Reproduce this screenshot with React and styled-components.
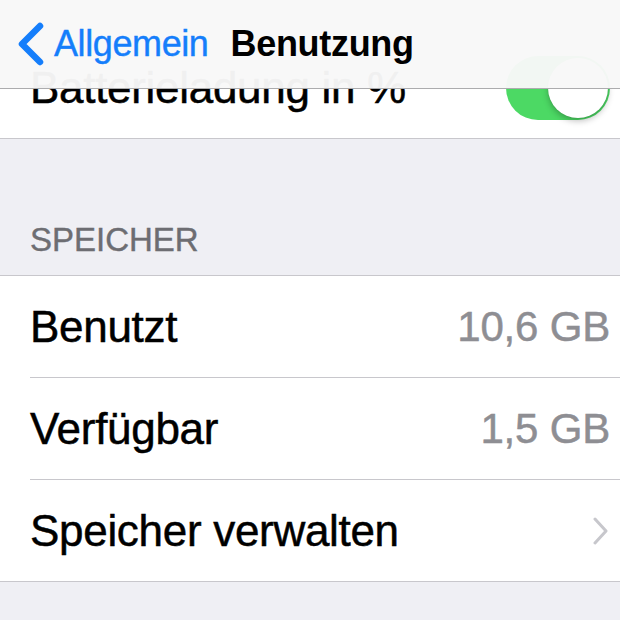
import React from 'react';
import styled, { createGlobalStyle } from 'styled-components';

const GlobalStyle = createGlobalStyle`
  html, body {
    margin: 0;
    padding: 0;
    background: #efeff4;
    overflow: hidden;
  }
  * { box-sizing: border-box; }
`;

const Screen = styled.div`
  position: relative;
  width: 620px;
  height: 620px;
  overflow: hidden;
  background: #efeff4;
  font-family: "Liberation Sans", Arial, sans-serif;
`;

// translucent bar that sits over the scrolled list
const NavBar = styled.div`
  position: absolute;
  top: 0;
  left: 0;
  right: 0;
  height: 89px;
  z-index: 2;
  display: flex;
  align-items: center;
  padding-left: 15px;
  background: rgba(248, 248, 248, 0.97);
  border-bottom: 1px solid #acacae;
`;

const BackButton = styled.div`
  display: flex;
  align-items: center;
  gap: 9px;
  color: #157efb;
  font-size: 36px;
  letter-spacing: -0.4px;
  -webkit-text-stroke: 0.4px #157efb;
`;

const NavTitle = styled.div`
  margin-left: 22px;
  font-size: 36px;
  font-weight: bold;
  color: #000;
  letter-spacing: -0.3px;
`;

const Content = styled.div`
  padding-top: 37px;
`;

const Group = styled.div`
  background: #fff;
  border-top: ${p => (p.noTop ? 'none' : '1px solid #c8c7cc')};
  border-bottom: 1px solid #c8c7cc;
`;

const Row = styled.div`
  position: relative;
  height: ${p => (p.last ? '101px' : '102px')};
  display: flex;
  align-items: center;
  justify-content: space-between;
  padding: 0 10px 0 30px;
  ${p => !p.last && `
    &::after {
      content: '';
      position: absolute;
      left: 30px;
      right: 0;
      bottom: 0;
      height: 1px;
      background: #c8c7cc;
    }
  `}
`;

const Label = styled.span`
  font-size: 44px;
  color: #000;
  letter-spacing: -0.3px;
  -webkit-text-stroke: 0.5px #000;
`;

const Value = styled.span`
  font-size: 42px;
  color: #8e8e93;
  letter-spacing: -0.2px;
  -webkit-text-stroke: 0.5px #8e8e93;
`;

const SectionHeader = styled.div`
  height: 136px;
  display: flex;
  align-items: flex-end;
  padding: 0 0 19px 30px;
  font-size: 33px;
  line-height: 1;
  color: #6d6d72;
  -webkit-text-stroke: 0.4px #6d6d72;
`;

const Toggle = styled.div`
  width: 104px;
  height: 64px;
  border-radius: 32px;
  background: #4cd964;
  display: flex;
  align-items: center;
  justify-content: ${p => (p.on ? 'flex-end' : 'flex-start')};
  padding: 2px;
`;

const Knob = styled.div`
  width: 60px;
  height: 60px;
  border-radius: 50%;
  background: #fff;
  box-shadow: 0 3px 6px rgba(0, 0, 0, 0.25), 0 0 1px rgba(0, 0, 0, 0.2);
`;

const Spacer = styled.div`
  height: 80px;
`;

const BackChevron = () => (
  <svg width="30" height="44" viewBox="0 0 30 44">
    <polyline
      points="25,4 7,22 25,40"
      fill="none"
      stroke="#157efb"
      strokeWidth="6.5"
      strokeLinecap="round"
      strokeLinejoin="round"
    />
  </svg>
);

const Chevron = () => (
  <svg width="18" height="28" viewBox="0 0 18 28">
    <polyline
      points="3,2 14,14 3,26"
      fill="none"
      stroke="#c7c7cc"
      strokeWidth="3"
      strokeLinecap="round"
      strokeLinejoin="round"
    />
  </svg>
);

export default function App() {
  return (
    <Screen>
      <GlobalStyle />
      <NavBar>
        <BackButton>
          <BackChevron />
          Allgemein
        </BackButton>
        <NavTitle>Benutzung</NavTitle>
      </NavBar>
      <Content>
        <Group noTop>
          <Row last>
            <Label>Batterieladung in %</Label>
            <Toggle on>
              <Knob />
            </Toggle>
          </Row>
        </Group>
        <SectionHeader>SPEICHER</SectionHeader>
        <Group>
          <Row>
            <Label>Benutzt</Label>
            <Value>10,6 GB</Value>
          </Row>
          <Row>
            <Label>Verfügbar</Label>
            <Value>1,5 GB</Value>
          </Row>
          <Row last>
            <Label>Speicher verwalten</Label>
            <Chevron />
          </Row>
        </Group>
        <Spacer />
      </Content>
    </Screen>
  );
}
